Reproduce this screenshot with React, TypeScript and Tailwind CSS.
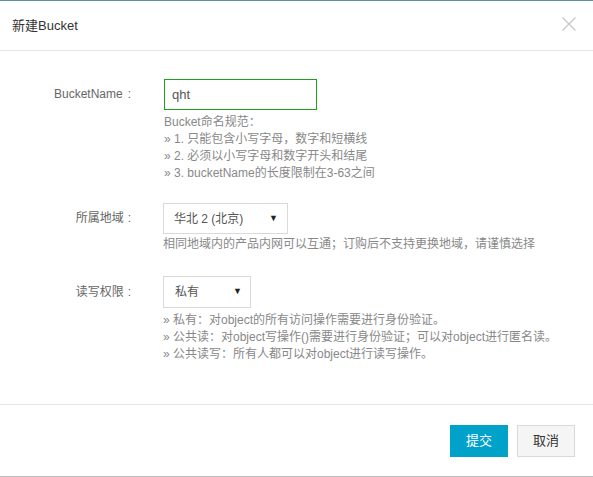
import React from "react";

const font = { fontFamily: '"Liberation Sans", "Noto Sans CJK SC", sans-serif' };

function Label({ text, lh }: { text: string; lh: string }) {
  return (
    <div className={`w-[131px] text-right text-[#666] ${lh}`}>
      {text}
      <span className="ml-[4px]">:</span>
    </div>
  );
}

export default function App() {
  return (
    <div className="w-[593px] h-[477px] bg-white flex flex-col text-[12px] overflow-hidden" style={font}>
      <div className="h-px bg-[#5a93a8] shrink-0" />
      <div className="h-[50px] border-b border-[#e5e5e5] flex items-center justify-between pl-[12px] pr-[16px] shrink-0">
        <span className="text-[13px] text-[#333]">新建Bucket</span>
        <svg width="16" height="16" viewBox="0 0 16 16" className="mt-[-4px]">
          <path d="M1.5 1.5 L14.5 14.5 M14.5 1.5 L1.5 14.5" stroke="#c9c9c9" strokeWidth="1.4" fill="none" />
        </svg>
      </div>
      <div className="flex-1 pt-[28px] flex flex-col">
        <div className="flex items-start">
          <div className="w-[131px] text-right leading-[31px] text-[#666]">
            BucketName<span className="ml-[5px]">:</span>
          </div>
          <div className="ml-[33px] flex flex-col">
            <div className="w-[153px] h-[31px] border border-[#1ea01e] pl-[7px] flex items-center text-[13px] text-[#555]">qht</div>
            <div className="mt-[4px] leading-[17px] text-[#888]">
              <div>Bucket命名规范：</div>
              <div>» 1. 只能包含小写字母，数字和短横线</div>
              <div>» 2. 必须以小写字母和数字开头和结尾</div>
              <div>» 3. bucketName的长度限制在3-63之间</div>
            </div>
          </div>
        </div>
        <div className="flex items-start mt-[21px]">
          <Label text="所属地域" lh="leading-[31px]" />
          <div className="ml-[32px] flex flex-col">
            <div className="w-[125px] h-[31px] border border-[#d9d9d9] pl-[10px] pr-[9px] flex items-center justify-between text-[#555]">
              <span>华北 2 (北京)</span>
              <span className="text-[9px] text-[#222]">▼</span>
            </div>
            <div className="mt-[2px] leading-[17px] text-[#888]">相同地域内的产品内网可以互通；订购后不支持更换地域，请谨慎选择</div>
          </div>
        </div>
        <div className="flex items-start mt-[23px]">
          <Label text="读写权限" lh="leading-[32px]" />
          <div className="ml-[32px] flex flex-col">
            <div className="w-[88px] h-[32px] border border-[#d9d9d9] pl-[11px] pr-[8px] flex items-center justify-between text-[#555]">
              <span>私有</span>
              <span className="text-[9px] text-[#222]">▼</span>
            </div>
            <div className="mt-[4px] leading-[17px] text-[#888]">
              <div>» 私有：对object的所有访问操作需要进行身份验证。</div>
              <div>» 公共读：对object写操作()需要进行身份验证；可以对object进行匿名读。</div>
              <div>» 公共读写：所有人都可以对object进行读写操作。</div>
            </div>
          </div>
        </div>
      </div>
      <div className="h-[73px] border-t border-b border-[#e5e5e5] border-b-[#bdbdbd] flex items-center justify-end gap-[9px] pr-[18px] shrink-0">
        <button className="w-[58px] h-[32px] bg-[#00a2ca] text-white text-[13px]">提交</button>
        <button className="w-[58px] h-[32px] bg-[#f5f5f5] border border-[#d9d9d9] text-[#333] text-[13px]">取消</button>
      </div>
    </div>
  );
}
